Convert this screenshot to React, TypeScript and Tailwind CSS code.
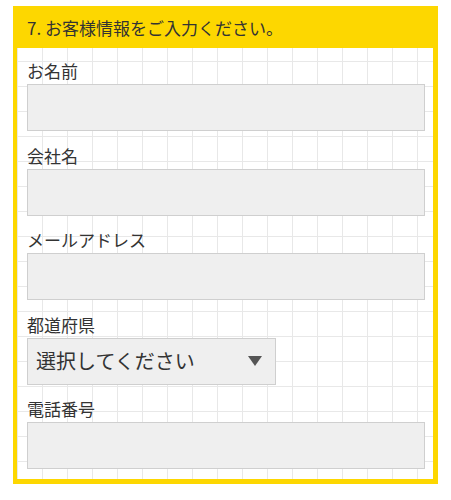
import React from "react";

const fields: { label: string; kind: "text" | "select" }[] = [
  { label: "お名前", kind: "text" },
  { label: "会社名", kind: "text" },
  { label: "メールアドレス", kind: "text" },
  { label: "都道府県", kind: "select" },
  { label: "電話番号", kind: "text" },
];

const App: React.FC = () => {
  return (
    <div
      className="w-[451px] h-[500px] bg-white pt-[6px] pl-[13px]"
      style={{ fontFamily: '"Noto Sans CJK JP", "Noto Sans", sans-serif' }}
    >
      <div className="w-[425px] bg-[#fdd700] pl-[4px] pr-[5px] pb-[5px]">
        <div className="h-[42px] flex items-center pl-[10px] text-[17px] text-[#333] pt-[2px]">
          7. お客様情報をご入力ください。
        </div>

        <div className="bg-white bg-[linear-gradient(to_right,#e8e8e8_1px,transparent_1px),linear-gradient(to_bottom,#e8e8e8_1px,transparent_1px)] bg-[length:25px_25px] bg-[position:0_13px] pl-[10px] pr-[8px] pt-[11px] pb-[10px]">
          {fields.map(({ label, kind }, i) => (
            <div key={i} className={i === fields.length - 1 ? "" : "mb-[12.5px]"}>
              <div className="text-[17px] leading-[24px] mb-px text-[#333]">{label}</div>
              {kind === "text" ? (
                <div className="h-[47px] w-full bg-[#efefef] border border-[#cfcfcf]" />
              ) : (
                <div className="h-[47px] w-[249px] bg-[#efefef] border border-[#cfcfcf] flex items-center justify-between pl-[8px] pr-[13px]">
                  <span className="text-[20px] text-[#333]">選択してください</span>
                  <svg width="14" height="10" viewBox="0 0 14 10">
                    <polygon points="0,0 14,0 7,10" fill="#555" />
                  </svg>
                </div>
              )}
            </div>
          ))}
        </div>
      </div>
    </div>
  );
};

export default App;
